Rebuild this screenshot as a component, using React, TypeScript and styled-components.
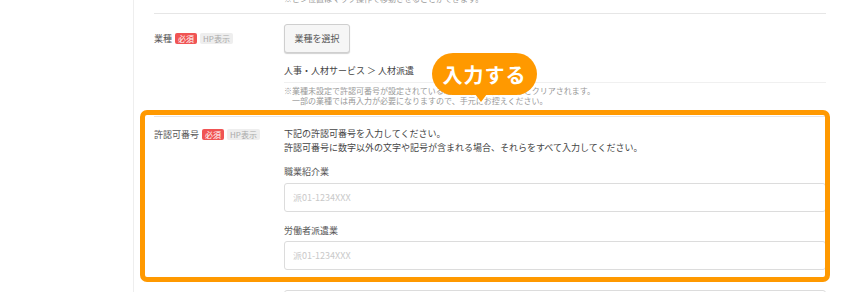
import React from "react";
import styled, { createGlobalStyle } from "styled-components";

const GlobalStyle = createGlobalStyle`
  html, body { margin: 0; padding: 0; background: #fff; overflow: hidden; }
  body { font-family: "Noto Sans CJK JP", "Noto Sans", sans-serif; color: #555; }
  * { box-sizing: border-box; }
`;

const Page = styled.div`
  position: relative;
  width: 848px;
  height: 292px;
  overflow: hidden;
`;

const Panel = styled.div`
  display: flow-root;
  margin-left: 133px;
  border-left: 1px solid #eee;
  padding: 0 22px 0 20px;
  min-height: 292px;
`;

const TopNote = styled.div`
  margin-top: -7px;
  height: 20px;
  padding-left: 130px;
  font-size: 8px;
  line-height: 12px;
  color: #999;
`;

const Row = styled.div<{ $pt?: number; $pb?: number }>`
  position: relative;
  display: grid;
  grid-template-columns: 130px 1fr;
  border-top: 1px solid #e6e6e6;
  padding-top: ${(p) => p.$pt ?? 10}px;
  padding-bottom: ${(p) => p.$pb ?? 10}px;
`;

const LabelCell = styled.div<{ $h: number }>`
  display: flex;
  align-items: center;
  gap: 3px;
  height: ${(p) => p.$h}px;
  font-size: 9px;
  color: #555;
`;

const Badge = styled.span<{ $kind: "req" | "hp" }>`
  display: inline-flex;
  align-items: center;
  height: 11px;
  padding: 0 3px;
  border-radius: 2px;
  font-size: 8px;
  line-height: 11px;
  background: ${(p) => (p.$kind === "req" ? "#f05454" : "#eeeeee")};
  color: ${(p) => (p.$kind === "req" ? "#fff" : "#aaa")};
`;

const Content = styled.div`
  display: flex;
  flex-direction: column;
  align-items: flex-start;
`;

const SelectButton = styled.button`
  width: 66px;
  height: 29px;
  padding: 0;
  border: 1px solid #cfcfcf;
  border-radius: 3px;
  background: #f6f6f6;
  box-shadow: 0 1px 1px rgba(0, 0, 0, 0.18);
  font-family: inherit;
  font-size: 9px;
  color: #555;
`;

const Selected = styled.div`
  align-self: stretch;
  margin-top: 11px;
  padding-bottom: 4px;
  border-bottom: 1px solid #f0f0f0;
  font-size: 9px;
  line-height: 14px;
  color: #444;
`;

const Notes = styled.div`
  margin-top: 3px;
  font-size: 8px;
  line-height: 10px;
  color: #999;
  white-space: pre;
`;

const Description = styled.div`
  font-size: 9px;
  line-height: 14px;
  color: #444;
`;

const FieldLabel = styled.div<{ $mt: number }>`
  margin-top: ${(p) => p.$mt}px;
  font-size: 9px;
  line-height: 14px;
  color: #555;
`;

const TextInput = styled.input<{ $mt: number }>`
  align-self: stretch;
  margin-top: ${(p) => p.$mt}px;
  height: 29px;
  padding: 0 8px;
  border: 1px solid #dcdcdc;
  border-radius: 3px;
  background: #fff;
  font-family: inherit;
  font-size: 9px;
  color: #444;
  outline: none;
  &::placeholder { color: #c9c9c9; }
`;

const Highlight = styled.div`
  position: relative;
  &::after {
    content: "";
    position: absolute;
    top: -6px;
    left: -14px;
    right: -4px;
    bottom: -3px;
    border: 5px solid #ff9900;
    border-radius: 7px;
    pointer-events: none;
    z-index: 2;
  }
`;

const Callout = styled.div`
  position: absolute;
  left: 432px;
  top: 53px;
  width: 105px;
  height: 42px;
  border-radius: 21px;
  background: #ff9900;
  color: #fff;
  font-size: 20px;
  font-weight: 700;
  letter-spacing: 1px;
  display: flex;
  align-items: center;
  justify-content: center;
  z-index: 3;
  &::after {
    content: "";
    position: absolute;
    left: 43px;
    bottom: -7px;
    border-left: 6px solid transparent;
    border-right: 6px solid transparent;
    border-top: 8px solid #ff9900;
  }
`;

export default function App() {
  return (
    <>
      <GlobalStyle />
      <Page>
        <Panel>
          <TopNote>※ピン位置はマップ操作で移動させることができます。</TopNote>
          <Row $pt={10} $pb={10}>
            <LabelCell $h={29}>
              業種
              <Badge $kind="req">必須</Badge>
              <Badge $kind="hp">HP表示</Badge>
            </LabelCell>
            <Content>
              <SelectButton>業種を選択</SelectButton>
              <Selected>人事・人材サービス ＞ 人材派遣</Selected>
              <Notes>
                {"※業種未設定で許認可番号が設定されている場合、業種を変更するとクリアされます。\n　一部の業種では再入力が必要になりますので、手元にお控えください。"}
              </Notes>
            </Content>
          </Row>
          <Highlight>
            <Row $pt={10} $pb={9}>
              <LabelCell $h={14}>
                許認可番号
                <Badge $kind="req">必須</Badge>
                <Badge $kind="hp">HP表示</Badge>
              </LabelCell>
              <Content>
                <Description>
                  下記の許認可番号を入力してください。
                  <br />
                  許認可番号に数字以外の文字や記号が含まれる場合、それらをすべて入力してください。
                </Description>
                <FieldLabel $mt={10}>職業紹介業</FieldLabel>
                <TextInput $mt={4} placeholder="派01-1234XXX" />
                <FieldLabel $mt={12}>労働者派遣業</FieldLabel>
                <TextInput $mt={3} placeholder="派01-1234XXX" />
              </Content>
            </Row>
          </Highlight>
          <Row $pt={10} $pb={10}>
            <LabelCell $h={29} />
            <Content>
              <TextInput $mt={0} />
            </Content>
          </Row>
        </Panel>
        <Callout>入力する</Callout>
      </Page>
    </>
  );
}
